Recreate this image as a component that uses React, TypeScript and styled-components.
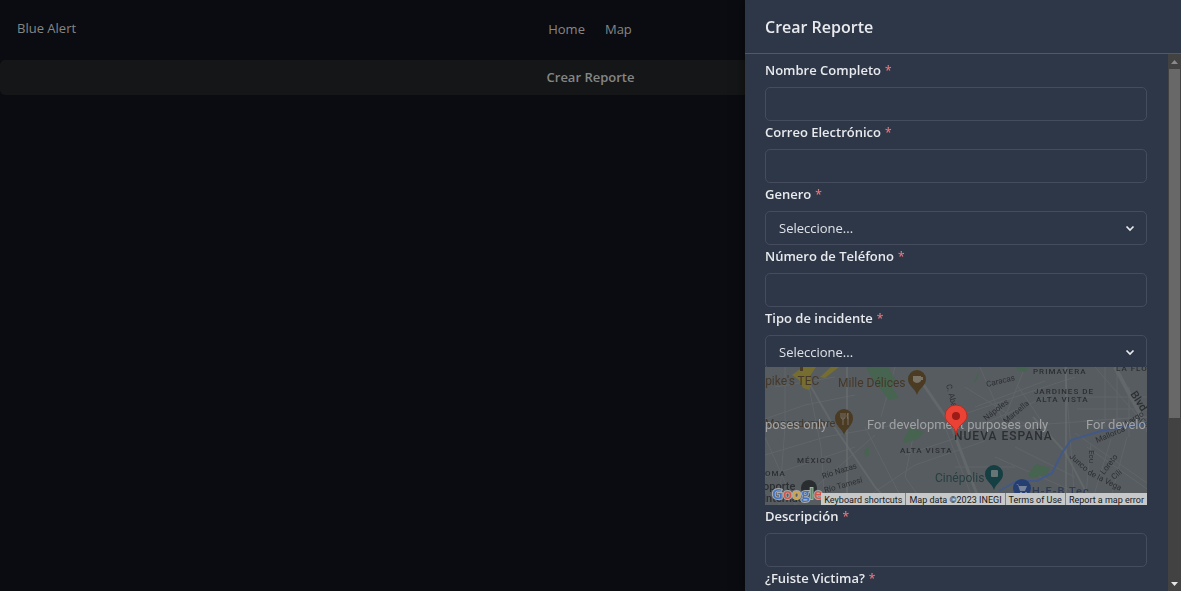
import React from 'react';
import styled, { createGlobalStyle } from 'styled-components';

const GlobalStyle = createGlobalStyle`
  *, *::before, *::after { box-sizing: border-box; }
  body {
    margin: 0;
    background: #0a0c11;
    color: #858686;
    font-family: 'Segoe UI', 'Open Sans', 'Noto Sans', sans-serif;
    font-size: 13px;
    line-height: 20px;
  }
`;

const Page = styled.div`
  min-height: 100vh;
`;

const Nav = styled.nav`
  display: grid;
  grid-template-columns: 1fr auto 1fr;
  align-items: center;
  height: 60px;
  padding: 0 18px 2px 17px;
`;

const Brand = styled.span`
  padding-bottom: 2px;
`;

const NavLinks = styled.div`
  display: flex;
  gap: 20px;
`;

const NavLink = styled.a`
  color: inherit;
  text-decoration: none;
`;

const OpenButton = styled.button`
  display: block;
  width: 100%;
  height: 35px;
  padding: 0 0 2px;
  border: 0;
  border-radius: 5px;
  background: #151617;
  color: #858686;
  font: inherit;
  font-weight: 600;
`;

const Drawer = styled.aside`
  position: fixed;
  top: 0;
  right: 0;
  bottom: 0;
  display: flex;
  flex-direction: column;
  width: 436px;
  max-width: 100%;
  background: #2e3748;
  color: #e8eaed;
  box-shadow: 0 0 12px rgba(0, 0, 0, 0.5);
`;

const DrawerHeader = styled.header`
  flex: none;
  height: 54px;
  padding: 16px 20px;
  border-bottom: 1px solid #50586a;
`;

const DrawerTitle = styled.h2`
  margin: 0;
  font-size: 16px;
  line-height: 22px;
  font-weight: 600;
`;

const DrawerBody = styled.div`
  display: flex;
  flex: 1;
  min-height: 0;
`;

const Form = styled.form`
  flex: 1;
  min-width: 0;
  overflow: hidden;
  padding: 5px 21px 0 20px;
`;

const FieldRow = styled.div`
  display: flex;
  flex-direction: column;
`;

const Label = styled.label`
  height: 28px;
  font-weight: 600;
  line-height: 22px;
`;

const Required = styled.span`
  margin-left: 4px;
  color: #e0757b;
  font-size: 12px;
`;

const controlStyle = `
  width: 100%;
  height: 34px;
  padding: 0 13px;
  border: 1px solid #444c5d;
  border-radius: 5px;
  background: transparent;
  color: #dfe2e7;
  font: inherit;
  outline: none;
`;

const TextInput = styled.input`${controlStyle}`;

const SelectBox = styled.div`
  position: relative;
`;

const Select = styled.select`
  ${controlStyle}
  display: block;
  appearance: none;
`;

const Chevron = styled.svg`
  position: absolute;
  top: 9px;
  right: 9px;
  pointer-events: none;
`;

const MapFrame = styled.div`
  position: relative;
  height: 138px;
  margin-top: -2px;
  overflow: hidden;
  background: #595e62;
`;

const MapDrawing = styled.svg`
  display: block;
  width: 100%;
  height: 100%;
`;

const MapCredits = styled.div`
  position: absolute;
  right: 0;
  bottom: 0;
  display: flex;
  height: 12px;
  background: #7f8183;
  gap: 1px;
  font-family: Roboto, 'Liberation Sans', sans-serif;
  font-size: 9px;
  line-height: 14px;
  white-space: nowrap;
`;

const creditStyle = `
  padding: 0 3px;
  border: 0;
  background: #c6c8ca;
  color: #16181a;
  font: inherit;
  text-decoration: none;
`;

const CreditButton = styled.button`${creditStyle}`;
const CreditText = styled.span`${creditStyle}`;
const CreditLink = styled.a`${creditStyle}`;

const ScrollTrack = styled.div`
  display: flex;
  flex: none;
  flex-direction: column;
  align-items: center;
  width: 13px;
  background: #424242;
`;

const ScrollThumb = styled.div`
  flex: 0 0 65%;
  width: 11px;
  background: #686868;
`;

const ScrollArrow = styled.svg`
  flex: none;
  display: block;
`;

const ScrollSpace = styled.div`
  flex: 1;
`;

type FieldProps = { id: string; label: string; select?: boolean };

function Field({ id, label, select }: FieldProps) {
  return (
    <FieldRow>
      <Label htmlFor={id}>
        {label}
        <Required aria-hidden="true">*</Required>
      </Label>
      {select ? (
        <SelectBox>
          <Select id={id} required>
            <option>Seleccione...</option>
          </Select>
          <Chevron width="16" height="16" viewBox="0 0 16 16" aria-hidden="true">
            <path d="M4.5 6.5 8 10l3.500-3.500" fill="none" stroke="#e8eaed" strokeWidth="1.700" />
          </Chevron>
        </SelectBox>
      ) : (
        <TextInput id={id} required />
      )}
    </FieldRow>
  );
}

function IncidentMap() {
  return (
    <MapFrame>
      <MapDrawing viewBox="0 0 382 138" preserveAspectRatio="xMidYMid slice" role="img" aria-label="Mapa">
        <rect width="382" height="138" fill="#575c60" />
        <g fill="none" stroke="#606569" strokeWidth="1">
          <path d="M0 52 40 38 90 28M0 88l60-18 80-14M0 110l90-30M90 138l60-40 70-24M20 0v60l-6 78M60 138 56 80 44 20M100 60l40 78M180 60l30 78M190 50l120-40M200 20l80 50M215 0l30 70M230 90l110 48M240 60 382 50M300 0l10 138M330 0l52 60M260 0l-20 50M310 66l72 50M320 30h62M312 42h70M318 54l64-4M340 0v60M352 0v60M364 20v50M326 76l-6 62M190 100h60M0 70l30 68M130 0l-14 50M150 60l-10 50 20 28M250 80l60 30" />
          <path d="M322 80l60 42M346 72l-20 66M362 70l-18 68M210 40l70-26M220 56l70-30M252 18l34 50M10 20l60-10M30 138l80-70M140 88l60-20" />
        </g>
        <g fill="none" stroke="#62676a" strokeWidth="3">
          <path d="M45 18 68 58l42 62 16 18" strokeWidth="2" />
          <path d="M152 8l34 50 30 80" />
          <path d="M350 0l32 60" strokeWidth="4" />
          <path d="M268 50l32 35 28 53" strokeWidth="2" />
        </g>
        <path d="M82 0v138M301 0v138" stroke="#6e7375" strokeWidth="1" />
        <g fill="#766d30">
          <path d="M27 8l11-8h13l-6 9 2 7-3 7-6-2-4-8zM55 10 66 0h8L60 11z" />
        </g>
        <g fill="#466450">
          <path d="M101 0h22l7 12-3 8 7 11-10 2-17-22zM138 74l7-13 14 4-6 7-14 4zM99 84l5-4v8l-3 2zM251 0h13l-3 5-8-1zM209 14l4-8 1 1-4 9zM263 107l8-10 14 4-3 7-17 3z" />
        </g>
        <path d="M382 56l-46 8-30 9-9 13-10 20-15 8h-20l-18 10" fill="none" stroke="#425987" strokeWidth="2" />
        <g fontFamily="Roboto, sans-serif" fontWeight="500" fill="#2c2f32">
          <g fontSize="8">
            <text x="32" y="96" letterSpacing="1">MÉXICO</text>
            <text x="-6" y="109" letterSpacing="1">ROMA</text>
            <text x="135" y="86" letterSpacing="1">ALTA VISTA</text>
            <text x="268" y="7" letterSpacing="1">PRIMAVERA</text>
            <text x="351" y="4" letterSpacing="1">LA FLOR</text>
            <text x="269" y="27" letterSpacing="1">JARDINES DE</text>
            <text x="271" y="35" letterSpacing="1">ALTA VISTA</text>
          </g>
          <text x="189" y="73" fontSize="12" letterSpacing="1">NUEVA ESPAÑA</text>
          <g fontSize="8" fontWeight="400">
            <text transform="translate(58 112) rotate(-18)">Río Nazas</text>
            <text transform="translate(60 126) rotate(-16)">Río Tamesí</text>
            <text transform="translate(222 20) rotate(-14)">Caracas</text>
            <text transform="translate(221 54) rotate(-38)">Nápoles</text>
            <text transform="translate(241 57) rotate(-40)">Marsella</text>
            <text transform="translate(181 18) rotate(75)">C. Aba</text>
            <text transform="translate(332 76) rotate(-23)">Mallorca</text>
            <text transform="translate(362 59) rotate(-32)">Largo</text>
            <text transform="translate(324 83) rotate(90)">Ecu</text>
            <text transform="translate(339 108) rotate(-52)">Loreto</text>
            <text transform="translate(349 113) rotate(-40)">Cili</text>
            <text transform="translate(304 90) rotate(42)">Junco</text>
            <text transform="translate(322 107) rotate(27)">de la Vega</text>
            <text transform="translate(365 27) rotate(57)" fontSize="11" fontWeight="500">Blvd</text>
            <text transform="translate(374 55) rotate(35)">Cam</text>
          </g>
          <g fontSize="12" fontWeight="400" fill="#453828">
            <text x="-7" y="18">Spike's TEC</text>
            <text x="73" y="20">Mille Délices</text>
            <text x="-15" y="60" fontSize="11">La Mansedumbre</text>
          </g>
          <text x="170" y="115" fontSize="12" fontWeight="400" fill="#263f40">Cinépolis</text>
          <text x="267" y="128" fontSize="11" letterSpacing="1" fill="#303b55">H-E-B Tec</text>
          <text x="-2" y="123" fontSize="11">oporte</text>
          <text x="-2" y="135" fontSize="11">Internac</text>
        </g>
        <path d="M35 0h3v4h-3z" fill="#493c22" />
        <g fill="#4b3b22">
          <path d="M152 28c-2-7-9-9-9-16a9 9 0 0 1 18 0c0 7-7 9-9 16z" />
          <path d="M79 68c-2-7-9-9-9-17a9 9 0 0 1 18 0c0 8-7 10-9 17z" />
        </g>
        <path d="M148 9h8v5q-4 4-8 0zM156 10h2v3h-2z" fill="#777166" />
        <path d="M76 46v4q0 2 2 2v6M80 46v4q0 2-2 2M78 46v5M83 46v12M83 46q-2 3 0 6" fill="none" stroke="#777166" />
        <path d="M229 123c-2-7-9-9-9-16a9 9 0 0 1 18 0c0 7-7 9-9 16z" fill="#153f42" />
        <rect x="226" y="103" width="7" height="7" rx="1" fill="#667575" />
        <circle cx="257" cy="121" r="9" fill="#263f73" />
        <path d="M251 117h2l1 2h8l-2 5h-5l-2-6" fill="#76839b" />
        <path d="M255 126h2M260 126h2" fill="none" stroke="#76839b" strokeWidth="2" />
        <circle cx="44" cy="121" r="8" fill="#292d30" />
        <g fontFamily="Roboto, sans-serif" fontSize="13" fill="#a0a2a4">
          <text x="-119" y="62">For development purposes only</text>
          <text x="102" y="62">For development purposes only</text>
          <text x="321" y="62">For development purposes only</text>
        </g>
        <path d="M191 68c-1-11-11-12-11-19a11 11 0 0 1 22 0c0 7-10 8-11 19z" fill="#ea4335" stroke="#b52c24" strokeWidth="1" />
        <circle cx="191" cy="49" r="4" fill="#9b1b16" />
        <text x="7" y="132" fontFamily="Open Sans, sans-serif" fontSize="15" fontWeight="600" stroke="#a9abad" strokeWidth="2" paintOrder="stroke">
          <tspan fill="#4274c4">G</tspan>
          <tspan fill="#d25649">o</tspan>
          <tspan fill="#d5a438">o</tspan>
          <tspan fill="#4274c4">g</tspan>
          <tspan fill="#459b58">l</tspan>
          <tspan fill="#d25649">e</tspan>
        </text>
      </MapDrawing>
      <MapCredits>
        <CreditButton type="button">Keyboard shortcuts</CreditButton>
        <CreditText>Map data ©2023 INEGI</CreditText>
        <CreditLink href="#terms">Terms of Use</CreditLink>
        <CreditLink href="#report">Report a map error</CreditLink>
      </MapCredits>
    </MapFrame>
  );
}

export default function App() {
  return (
    <>
      <GlobalStyle />
      <Page>
        <Nav>
          <Brand>Blue Alert</Brand>
          <NavLinks>
            <NavLink href="#home">Home</NavLink>
            <NavLink href="#map">Map</NavLink>
          </NavLinks>
        </Nav>
        <OpenButton type="button">Crear Reporte</OpenButton>
      </Page>
      <Drawer role="dialog" aria-labelledby="drawer-title">
        <DrawerHeader>
          <DrawerTitle id="drawer-title">Crear Reporte</DrawerTitle>
        </DrawerHeader>
        <DrawerBody>
          <Form>
            <Field id="name" label="Nombre Completo" />
            <Field id="email" label="Correo Electrónico" />
            <Field id="gender" label="Genero" select />
            <Field id="phone" label="Número de Teléfono" />
            <Field id="incident" label="Tipo de incidente" select />
            <IncidentMap />
            <Field id="description" label="Descripción" />
            <Field id="victim" label="¿Fuiste Victima?" select />
          </Form>
          <ScrollTrack aria-hidden="true">
            <ScrollArrow width="13" height="15" viewBox="0 0 13 15">
              <path d="M3 10h7L6.500 6z" fill="#8a8a8a" />
            </ScrollArrow>
            <ScrollThumb />
            <ScrollSpace />
            <ScrollArrow width="13" height="15" viewBox="0 0 13 15">
              <path d="M3 6h7l-3.500 4z" fill="#e6e6e6" />
            </ScrollArrow>
          </ScrollTrack>
        </DrawerBody>
      </Drawer>
    </>
  );
}
